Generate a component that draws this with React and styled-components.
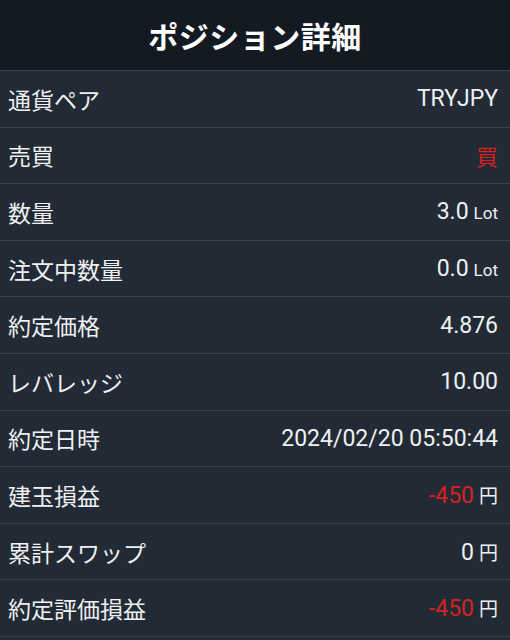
import React from "react";
import styled, { createGlobalStyle } from "styled-components";

const GlobalStyle = createGlobalStyle`
  html, body { margin: 0; padding: 0; background: #222b35; }
  body { font-family: Roboto, "Noto Sans CJK JP", sans-serif; color: #eef0f2; }
`;

const Screen = styled.div`
  width: 510px;
  height: 640px;
  overflow: hidden;
  background: #222b35;
  display: flex;
  flex-direction: column;
`;

const Header = styled.div`
  height: 70px;
  background: #141a22;
  border-bottom: 1px solid #35414c;
  display: flex;
  align-items: center;
  justify-content: center;
  font-family: "Noto Sans CJK JP", sans-serif;
  font-weight: 700;
  font-size: 30px;
  color: #ffffff;
  letter-spacing: 0.5px;
`;

const Row = styled.div`
  height: 55.6px;
  border-bottom: 1px solid #35414c;
  display: flex;
  align-items: center;
  justify-content: space-between;
  padding: 0 12px 0 8px;
`;

const Label = styled.span`
  font-family: "Noto Sans CJK JP", sans-serif;
  font-size: 23px;
  color: #eef0f2;
`;

const Value = styled.span`
  font-family: ${(p) => (p.$jp ? '"Noto Sans CJK JP", sans-serif' : 'Roboto, "Noto Sans CJK JP", sans-serif')};
  font-size: ${(p) => (p.$jp ? "22px" : "23px")};
  color: #eef0f2;
  display: flex;
  align-items: baseline;
`;

const Unit = styled.span`
  font-family: ${(p) => (p.$jp ? '"Noto Sans CJK JP", sans-serif' : "Roboto, sans-serif")};
  font-size: ${(p) => (p.$jp ? "19px" : "17px")};
  color: #eef0f2;
  margin-left: 5px;
`;

const Num = styled.span`
  color: ${(p) => (p.$red ? "#d42121" : "inherit")};
`;

const rows = [
  { label: "通貨ペア", value: "TRYJPY" },
  { label: "売買", value: "買", red: true, jp: true },
  { label: "数量", value: "3.0", unit: "Lot" },
  { label: "注文中数量", value: "0.0", unit: "Lot" },
  { label: "約定価格", value: "4.876" },
  { label: "レバレッジ", value: "10.00" },
  { label: "約定日時", value: "2024/02/20 05:50:44" },
  { label: "建玉損益", value: "-450", unit: "円", red: true },
  { label: "累計スワップ", value: "0", unit: "円" },
  { label: "約定評価損益", value: "-450", unit: "円", red: true },
];

export default function App() {
  return (
    <Screen>
      <GlobalStyle />
      <Header>ポジション詳細</Header>
      {rows.map((r) => (
        <Row key={r.label}>
          <Label>{r.label}</Label>
          <Value $jp={r.jp}>
            <Num $red={r.red}>{r.value}</Num>
            {r.unit && <Unit $jp={r.unit === "円"}>{r.unit}</Unit>}
          </Value>
        </Row>
      ))}
    </Screen>
  );
}
